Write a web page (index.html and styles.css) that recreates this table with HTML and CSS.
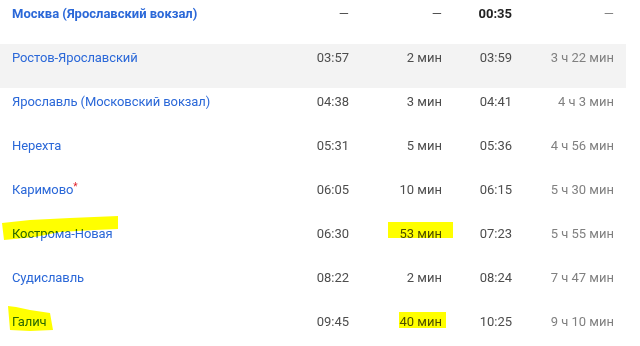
FILE: index.html
```html
<!DOCTYPE html>
<html lang="ru">
<head>
<meta charset="utf-8">
<link rel="stylesheet" href="styles.css">
</head>
<body>
<div class="table">
  <div class="row first">
    <a class="name bold">Москва (Ярославский вокзал)</a>
    <span class="time">—</span>
    <span class="stop">—</span>
    <span class="time bold">00:35</span>
    <span class="dur">—</span>
  </div>
  <div class="row shaded">
    <a class="name">Ростов-Ярославский</a>
    <span class="time">03:57</span>
    <span class="stop">2 мин</span>
    <span class="time">03:59</span>
    <span class="dur">3 ч 22 мин</span>
  </div>
  <div class="row">
    <a class="name">Ярославль (Московский вокзал)</a>
    <span class="time">04:38</span>
    <span class="stop">3 мин</span>
    <span class="time">04:41</span>
    <span class="dur">4 ч 3 мин</span>
  </div>
  <div class="row">
    <a class="name">Нерехта</a>
    <span class="time">05:31</span>
    <span class="stop">5 мин</span>
    <span class="time">05:36</span>
    <span class="dur">4 ч 56 мин</span>
  </div>
  <div class="row">
    <a class="name">Каримово<sup class="star">*</sup></a>
    <span class="time">06:05</span>
    <span class="stop">10 мин</span>
    <span class="time">06:15</span>
    <span class="dur">5 ч 30 мин</span>
  </div>
  <div class="row">
    <a class="name">Кострома-Новая</a>
    <span class="time">06:30</span>
    <span class="stop">53 мин</span>
    <span class="time">07:23</span>
    <span class="dur">5 ч 55 мин</span>
  </div>
  <div class="row">
    <a class="name">Судиславль</a>
    <span class="time">08:22</span>
    <span class="stop">2 мин</span>
    <span class="time">08:24</span>
    <span class="dur">7 ч 47 мин</span>
  </div>
  <div class="row">
    <a class="name">Галич</a>
    <span class="time">09:45</span>
    <span class="stop">40 мин</span>
    <span class="time">10:25</span>
    <span class="dur">9 ч 10 мин</span>
  </div>
</div>
<svg class="marker" width="640" height="346" viewBox="0 0 640 346" xmlns="http://www.w3.org/2000/svg">
  <polygon points="2,223 30,220 70,218 118,216 118,229 95,230 60,232 35,237 4,240" fill="#ffff00"/>
  <rect x="388" y="222" width="65" height="16" fill="#ffff00"/>
  <polygon points="8,306 16,307 30,310 50,313 53,330 30,331 10,330 9,318" fill="#ffff00"/>
  <rect x="399" y="312" width="47" height="16" fill="#ffff00"/>
</svg>
</body>
</html>
```

FILE: styles.css
```css
html, body {
  margin: 0;
  padding: 0;
  background: #ffffff;
}
body {
  font-family: Roboto, "Liberation Sans", sans-serif;
  font-size: 13px;
  color: #4d4d4d;
  position: relative;
  width: 640px;
  height: 346px;
  overflow: hidden;
}
.table {
  width: 626px;
}
.row {
  display: grid;
  grid-template-columns: 269px 80px 93px 70px 102px;
  padding-right: 12px;
  height: 44px;
  box-sizing: border-box;
  padding-top: 6px;
  line-height: 15px;
}
.shaded {
  background: #f3f3f3;
}
.name {
  padding-left: 12px;
  color: #2b68d8;
  text-decoration: none;
  white-space: nowrap;
  letter-spacing: -0.1px;
}
.time, .stop, .dur {
  text-align: right;
  white-space: nowrap;
}
.dur {
  color: #808080;
}
.bold {
  font-weight: 700;
}
.name.bold {
  letter-spacing: 0;
}
.time.bold {
  color: #222222;
}
.star {
  color: #e0202a;
  font-size: 10px;
  line-height: 0;
  vertical-align: 4px;
}
.marker {
  position: absolute;
  left: 0;
  top: 0;
  mix-blend-mode: multiply;
  pointer-events: none;
}
```
